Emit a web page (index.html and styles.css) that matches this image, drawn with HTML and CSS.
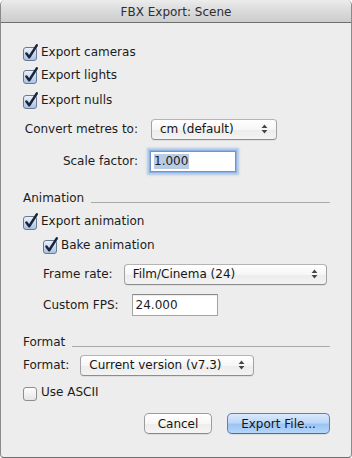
FILE: index.html
```html
<!DOCTYPE html>
<html>
<head>
<meta charset="utf-8">
<title>FBX Export: Scene</title>
<link rel="stylesheet" href="styles.css">
</head>
<body>
<div class="window">
  <div class="titlebar">FBX Export: Scene</div>
  <div class="content">
    <div class="check r1">
      <svg class="cb" width="18" height="20" viewBox="0 0 18 20"><defs><linearGradient id="gc" x1="0" y1="0" x2="0" y2="1"><stop offset="0" stop-color="#eef3fb"/><stop offset="0.5" stop-color="#c9daf1"/><stop offset="1" stop-color="#a6c0e4"/></linearGradient></defs><rect x="0.5" y="5.5" width="13" height="13" rx="2.5" fill="url(#gc)" stroke="#6b7890"/><path d="M3.4 11.6 L6.2 15.2 L13.8 3.4" fill="none" stroke="#1b253a" stroke-width="2.5" stroke-linecap="round" stroke-linejoin="round"/></svg>
      <span>Export cameras</span>
    </div>
    <div class="check r2">
      <svg class="cb" width="18" height="20" viewBox="0 0 18 20"><rect x="0.5" y="5.5" width="13" height="13" rx="2.5" fill="url(#gc)" stroke="#6b7890"/><path d="M3.4 11.6 L6.2 15.2 L13.8 3.4" fill="none" stroke="#1b253a" stroke-width="2.5" stroke-linecap="round" stroke-linejoin="round"/></svg>
      <span>Export lights</span>
    </div>
    <div class="check r3">
      <svg class="cb" width="18" height="20" viewBox="0 0 18 20"><rect x="0.5" y="5.5" width="13" height="13" rx="2.5" fill="url(#gc)" stroke="#6b7890"/><path d="M3.4 11.6 L6.2 15.2 L13.8 3.4" fill="none" stroke="#1b253a" stroke-width="2.5" stroke-linecap="round" stroke-linejoin="round"/></svg>
      <span>Export nulls</span>
    </div>

    <div class="formgrid">
      <div class="glabel">Convert metres to:</div>
      <div class="popup popup-units"><span class="ptext">cm (default)</span><svg class="arrows" width="7" height="10" viewBox="0 0 7 10"><path d="M0.6 4 L3.5 0.6 L6.4 4 Z M0.6 6 L3.5 9.4 L6.4 6 Z" fill="#454545"/></svg></div>
      <div class="glabel scale-label">Scale factor:</div>
      <div class="field focused"><span class="sel">1.000</span></div>
    </div>

    <div class="section sec-anim"><span>Animation</span><div class="rule"></div></div>

    <div class="check r-anim">
      <svg class="cb" width="18" height="20" viewBox="0 0 18 20"><rect x="0.5" y="5.5" width="13" height="13" rx="2.5" fill="url(#gc)" stroke="#6b7890"/><path d="M3.4 11.6 L6.2 15.2 L13.8 3.4" fill="none" stroke="#1b253a" stroke-width="2.5" stroke-linecap="round" stroke-linejoin="round"/></svg>
      <span>Export animation</span>
    </div>
    <div class="check r-bake indent">
      <svg class="cb" width="18" height="20" viewBox="0 0 18 20"><rect x="0.5" y="5.5" width="13" height="13" rx="2.5" fill="url(#gc)" stroke="#6b7890"/><path d="M3.4 11.6 L6.2 15.2 L13.8 3.4" fill="none" stroke="#1b253a" stroke-width="2.5" stroke-linecap="round" stroke-linejoin="round"/></svg>
      <span>Bake animation</span>
    </div>

    <div class="row r-frame indent">
      <span class="lbl">Frame rate:</span>
      <div class="popup popup-frame"><span class="ptext">Film/Cinema (24)</span><svg class="arrows" width="7" height="10" viewBox="0 0 7 10"><path d="M0.6 4 L3.5 0.6 L6.4 4 Z M0.6 6 L3.5 9.4 L6.4 6 Z" fill="#454545"/></svg></div>
    </div>
    <div class="row r-fps indent">
      <span class="lbl">Custom FPS:</span>
      <div class="field fps"><span>24.000</span></div>
    </div>

    <div class="section sec-format"><span>Format</span><div class="rule"></div></div>

    <div class="row r-format">
      <span class="lbl">Format:</span>
      <div class="popup popup-format"><span class="ptext">Current version (v7.3)</span><svg class="arrows" width="7" height="10" viewBox="0 0 7 10"><path d="M0.6 4 L3.5 0.6 L6.4 4 Z M0.6 6 L3.5 9.4 L6.4 6 Z" fill="#454545"/></svg></div>
    </div>
    <div class="check r-ascii">
      <svg class="cb" width="18" height="20" viewBox="0 0 18 20"><defs><linearGradient id="gu" x1="0" y1="0" x2="0" y2="1"><stop offset="0" stop-color="#ffffff"/><stop offset="1" stop-color="#e4e4e4"/></linearGradient></defs><rect x="0.5" y="5.5" width="13" height="13" rx="2.5" fill="url(#gu)" stroke="#8e8e8e"/></svg>
      <span>Use ASCII</span>
    </div>

    <div class="buttons">
      <div class="btn">Cancel</div>
      <div class="btn default">Export File...</div>
    </div>
  </div>
</div>
</body>
</html>
```

FILE: styles.css
```css
html, body {
  margin: 0;
  padding: 0;
  background: #ffffff;
}

body {
  font-family: "DejaVu Sans", "Liberation Sans", sans-serif;
  font-size: 12px;
  color: #1c1c1c;
}

.window {
  width: 352px;
  height: 458px;
  box-sizing: border-box;
  border: 1px solid #8a8a8a;
  border-top: none;
  border-bottom-color: #6f6f6f;
  border-radius: 5px 5px 4px 4px;
  background: #ededed;
  overflow: hidden;
  display: flex;
  flex-direction: column;
}

.titlebar {
  height: 22px;
  flex: none;
  border-bottom: 1px solid #6e6e6e;
  background: linear-gradient(#ececec, #dcdcdc 45%, #cdcdcd);
  text-align: center;
  line-height: 24px;
  font-size: 12px;
  color: #2e2e2e;
}

.content {
  display: flex;
  flex-direction: column;
  padding: 17px 21px 0 22px;
}

/* checkboxes */
.check {
  display: flex;
  align-items: center;
}
.check .cb {
  flex: none;
  display: block;
}
.indent {
  margin-left: 20px;
}

.r1 { height: 23px; }
.r2 { height: 24px; }
.r3 { height: 26px; }

/* grid for convert / scale */
.formgrid {
  display: grid;
  grid-template-columns: 115px 126px;
  grid-template-rows: 22px 24px;
  column-gap: 13px;
  row-gap: 9px;
  margin-top: 5px;
  align-items: center;
}
.glabel {
  text-align: right;
}

/* popup buttons */
.popup {
  box-sizing: border-box;
  height: 21px;
  border: 1px solid #a2a2a2;
  border-top-color: #b4b4b4;
  border-bottom-color: #8d8d8d;
  border-radius: 4px;
  background: linear-gradient(#ffffff, #f6f6f6 50%, #ececec 51%, #f3f3f3);
  box-shadow: 0 1px 0 rgba(0, 0, 0, 0.06);
  display: flex;
  align-items: center;
  justify-content: space-between;
  padding: 0 8px 0 8px;
  color: #151515;
}
.popup .arrows {
  display: block;
  flex: none;
}
.popup-units { width: 126px; }
.popup-frame { width: 203px; }
.popup-format { width: 174px; }

/* text fields */
.field {
  box-sizing: border-box;
  height: 22px;
  border: 1px solid #a3a3a3;
  border-top-color: #888888;
  background: #ffffff;
  box-shadow: inset 0 1px 1px rgba(0, 0, 0, 0.08);
  display: flex;
  align-items: center;
  padding-left: 3px;
}
.field.focused {
  width: 86px;
  height: 21px;
  margin-left: -1px;
  border-color: #6f95c9;
  box-shadow: 0 0 0 1px #8fb3e4, 0 0 2px 3px rgba(120, 165, 225, 0.55);
}
.sel {
  background: #b9cce3;
  line-height: 15px;
  padding-right: 1px;
}
.field.fps {
  width: 86px;
}

/* section headers */
.section {
  display: flex;
  align-items: center;
  height: 16px;
}
.section .rule {
  flex: 1;
  height: 1px;
  background: #a9a9a9;
  margin-left: 7px;
  align-self: flex-end;
  margin-bottom: 3px;
}
.sec-anim { margin-top: 17px; }
.sec-format { margin-top: 17px; }

.r-anim { height: 22px; margin-top: 4px; }
.r-bake { height: 25px; }

.row {
  display: flex;
  align-items: center;
}
.r-frame { height: 22px; margin-top: 6px; gap: 11px; }
.r-fps { height: 24px; margin-top: 8px; gap: 13px; }
.r-format { height: 22px; margin-top: 4px; gap: 11px; }
.r-ascii { height: 20px; margin-top: 6px; }

/* push buttons */
.buttons {
  display: flex;
  justify-content: flex-end;
  gap: 15px;
  margin-top: 11px;
}
.btn {
  box-sizing: border-box;
  height: 21px;
  border: 1px solid #9c9c9c;
  border-bottom-color: #8a8a8a;
  border-radius: 5px;
  background: linear-gradient(#ffffff, #f7f7f7 50%, #ededed 51%, #f5f5f5);
  box-shadow: 0 1px 0 rgba(0, 0, 0, 0.07);
  display: flex;
  align-items: center;
  justify-content: center;
  width: 68px;
  color: #151515;
}
.btn.default {
  width: 103px;
  border-color: #5a7fbb;
  border-bottom-color: #4a6ea8;
  background: linear-gradient(#dbeafc, #bcd7f8 45%, #9cc4f3 55%, #b4d6fa);
}
```
